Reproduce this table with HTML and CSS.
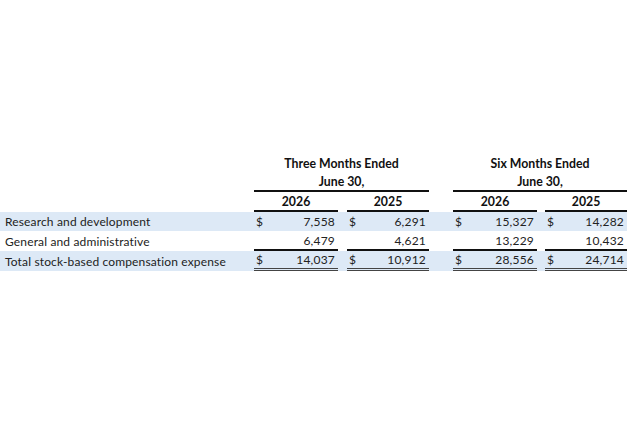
FILE: index.html
```html
<!DOCTYPE html>
<html lang="en">
<head>
<meta charset="utf-8">
<title>Stock-based compensation</title>
<link rel="stylesheet" href="styles.css">
</head>
<body>
<table class="comp">
  <colgroup>
    <col class="c-label"><col class="c-num"><col class="c-gap"><col class="c-num2"><col class="c-gap-wide"><col class="c-num"><col class="c-gap2"><col class="c-num2">
  </colgroup>
  <tr class="h1">
    <td></td>
    <td colspan="3" class="head">Three Months Ended</td>
    <td></td>
    <td colspan="3" class="head">Six Months Ended</td>
  </tr>
  <tr class="h2">
    <td></td>
    <td colspan="3" class="head rule">June 30,</td>
    <td></td>
    <td colspan="3" class="head rule">June 30,</td>
  </tr>
  <tr class="h3">
    <td></td>
    <td class="head rule">2026</td><td></td>
    <td class="head rule">2025</td><td></td>
    <td class="head rule">2026</td><td></td>
    <td class="head rule">2025</td>
  </tr>
  <tr class="row shade">
    <td class="label">Research and development</td>
    <td><div class="amt"><span>$</span><span>7,558</span></div></td><td></td>
    <td><div class="amt"><span>$</span><span>6,291</span></div></td><td></td>
    <td><div class="amt"><span>$</span><span>15,327</span></div></td><td></td>
    <td><div class="amt"><span>$</span><span>14,282</span></div></td>
  </tr>
  <tr class="row r2">
    <td class="label">General and administrative</td>
    <td class="rule"><div class="amt"><span></span><span>6,479</span></div></td><td></td>
    <td class="rule"><div class="amt"><span></span><span>4,621</span></div></td><td></td>
    <td class="rule"><div class="amt"><span></span><span>13,229</span></div></td><td></td>
    <td class="rule"><div class="amt"><span></span><span>10,432</span></div></td>
  </tr>
  <tr class="row shade total">
    <td class="label">Total stock-based compensation expense</td>
    <td class="dbl"><div class="amt"><span>$</span><span>14,037</span></div></td><td></td>
    <td class="dbl"><div class="amt"><span>$</span><span>10,912</span></div></td><td></td>
    <td class="dbl"><div class="amt"><span>$</span><span>28,556</span></div></td><td></td>
    <td class="dbl"><div class="amt"><span>$</span><span>24,714</span></div></td>
  </tr>
</table>
</body>
</html>
```
FILE: styles.css
```css
html, body {
  margin: 0;
  padding: 0;
  background: #ffffff;
}
body {
  font-family: "Lato", "Liberation Sans", sans-serif;
  font-size: 12px;
  color: #222222;
}
.comp {
  margin-top: 153px;
  border-collapse: separate;
  border-spacing: 0;
  table-layout: fixed;
  width: 627px;
}
.c-label { width: 254px; }
.c-num { width: 84px; }
.c-num2 { width: 82px; }
.c-gap { width: 9px; }
.c-gap2 { width: 8px; }
.c-gap-wide { width: 24px; }
.comp td {
  padding: 0;
  vertical-align: middle;
  white-space: nowrap;
}
.head {
  text-align: center;
  font-weight: 700;
  font-size: 12.3px;
  color: #111111;
}
.h1 td { height: 20px; }
.h2 td { height: 17px; }
.h3 td { height: 18px; }
.rule { border-bottom: 2px solid #111111; }
.row td { height: 19px; }
.r2 td { height: 18px; }
.total td { height: 17px; }
.dbl { border-bottom: 3px double #444444; }
.shade td { background: #dde9f6; }
.label {
  padding-left: 5px !important;
  letter-spacing: 0.15px;
}
.amt {
  display: flex;
  justify-content: space-between;
  padding: 0 3px 0 2px;
  letter-spacing: 0.2px;
}
```
